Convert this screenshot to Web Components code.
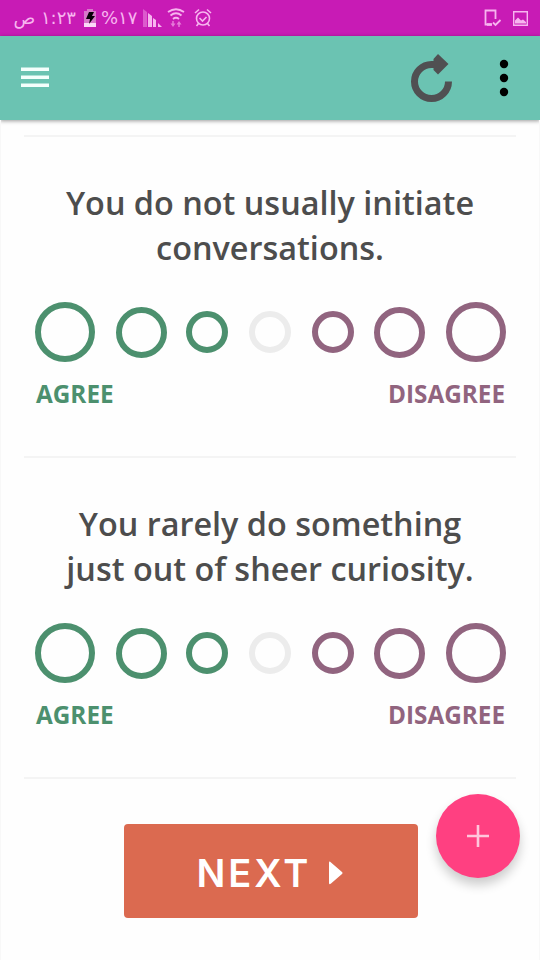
<!DOCTYPE html>
<html lang="en">
<head>
<meta charset="UTF-8">
<meta name="viewport" content="width=device-width, initial-scale=1.0">
<title>Personality Test</title>
<style>
    body {
        margin: 0;
        background: #fefefe;
        font-family: "Open Sans", "Noto Sans", sans-serif;
        color: #4d4d4d;
    }
</style>
</head>
<body>
<test-app>
    <status-bar slot="status"></status-bar>
    <app-bar slot="bar"></app-bar>
    <question-card>You do not usually initiate<br>conversations.</question-card>
    <question-card>You rarely do something<br>just out of sheer curiosity.</question-card>
    <next-button>NEXT</next-button>
    <fab-button slot="fab"></fab-button>
</test-app>

<script>
class TestApp extends HTMLElement {
    connectedCallback() {
        this.attachShadow({ mode: 'open' });
        this.shadowRoot.innerHTML = `
            <style>
                :host {
                    display: flex;
                    flex-direction: column;
                    position: relative;
                    height: 960px;
                    overflow: hidden;
                }
                main {
                    flex: 1;
                    display: flex;
                    flex-direction: column;
                    padding: 15px 23px 0;
                    border: solid #f8f8f8;
                    border-width: 0 1px;
                }
            </style>
            <slot name="status"></slot>
            <slot name="bar"></slot>
            <main><slot></slot></main>
            <slot name="fab"></slot>
        `;
    }
}

class StatusBar extends HTMLElement {
    connectedCallback() {
        this.attachShadow({ mode: 'open' });
        this.shadowRoot.innerHTML = `
            <style>
                :host {
                    display: flex;
                    justify-content: space-between;
                    box-sizing: border-box;
                    height: 36px;
                    padding: 0 12px;
                    background: #c81bb5;
                    color: #f7b5ef;
                    font: 18px/34px "DejaVu Sans", sans-serif;
                }
                .group {
                    display: flex;
                    align-items: center;
                }
                .time {
                    width: 64px;
                    white-space: nowrap;
                }
                .percent {
                    width: 34px;
                    margin-left: 5px;
                    font-size: 18px;
                    white-space: nowrap;
                }
                svg {
                    display: block;
                    fill: none;
                    stroke: currentColor;
                }
            </style>
            <div class="group">
                <span class="time" dir="rtl">١:٢٣ ص</span>
                <svg width="12" height="18" style="margin-left:8px" stroke="none">
                    <path d="M3 0h6v2h3v16H0V2h3z" fill="#d878ca" stroke="none"/>
                    <path d="M0 14h12v4H0z" fill="#fbd9f7" stroke="none"/>
                    <path d="M5 3h5L8 7h3l-6 8 1-5H2z" fill="#080008" stroke="none"/>
                </svg>
                <span class="percent">%١٧</span>
                <svg width="20" height="20" style="margin-left:8px">
                    <path d="M0 1l4 3v15H0z" fill="#dc5bcd" stroke="none"/>
                    <path d="M5 5l4 3v11H5zM10 10l3 2v7h-3zM15 15l4 4h-4z" fill="currentColor" stroke="none"/>
                </svg>
                <svg width="18" height="20" style="margin-left:4px">
                    <path d="M1 4q8-5.500 16 0M3.500 7.500q5.500-4.500 11 0M6 11q3-2.500 6 0" stroke-width="1.800"/>
                    <path d="M6 13v3M12 19v-3" stroke="#e67bd9" stroke-width="1.500"/>
                    <path d="M3.500 15.500h5L6 19zM9.500 16.500h5L12 13z" fill="#e67bd9" stroke="none"/>
                </svg>
                <svg width="18" height="20" style="margin-left:9px" stroke-width="1.600">
                    <circle cx="9" cy="10.500" r="6.500"/>
                    <path d="M1 5l4-3.500M17 5l-4-3.500M4.500 15.500L2.500 18M13.500 15.500l2 2.500M5.500 10l3 3 4-4"/>
                </svg>
            </div>
            <div class="group">
                <svg width="18" height="18" stroke-width="1.800">
                    <path d="M11.500 10V1.500H1.500v14h6"/>
                    <path d="M3 15.500h5" stroke-width="2.500"/>
                    <path d="M9 13.500l2.500 2.500 5-5"/>
                </svg>
                <svg width="15" height="15" style="margin-left:11px">
                    <path d="M.7.7h13.600v13.600H.7z" stroke-width="1.400"/>
                    <path d="M2 12.500V9.500l3-3 3 3 2-1 3 2.500v1.500z" fill="currentColor" stroke="none"/>
                </svg>
            </div>
        `;
    }
}

class AppBar extends HTMLElement {
    connectedCallback() {
        this.attachShadow({ mode: 'open' });
        this.shadowRoot.innerHTML = `
            <style>
                :host {
                    display: flex;
                    align-items: center;
                    box-sizing: border-box;
                    height: 84px;
                    padding: 0 31px 0 21px;
                    background: #6bc3b2;
                    box-shadow: 0 1px 4px rgba(0, 0, 0, 0.4);
                }
                svg {
                    display: block;
                }
                .reload {
                    margin-left: auto;
                }
                .more {
                    margin-left: 46px;
                }
            </style>
            <svg width="28" height="22" fill="#f4fffc">
                <path d="M0 .5h28v3.500H0zM0 8.500h28v3.500H0zM0 16.500h28v3.500H0z"/>
            </svg>
            <svg class="reload" width="42" height="48">
                <path d="M37.500 27.500A17 17 0 1 1 20.500 10.500H25" fill="none" stroke="#505052" stroke-width="7"/>
                <path d="M27 0L37.500 10 27 20.500 22.500 16V5z" fill="#505052"/>
            </svg>
            <svg class="more" width="10" height="38">
                <circle cx="5" cy="5" r="4.200"/>
                <circle cx="5" cy="19" r="4.200"/>
                <circle cx="5" cy="33" r="4.200"/>
            </svg>
        `;
    }
}

class QuestionCard extends HTMLElement {
    connectedCallback() {
        this.attachShadow({ mode: 'open' });
        this.shadowRoot.innerHTML = `
            <style>
                :host {
                    display: block;
                    box-sizing: border-box;
                    height: 321px;
                    padding-top: 43px;
                    border-top: 2px solid #f4f4f4;
                    text-align: center;
                }
                .question {
                    font-size: 32.4px;
                    font-weight: 600;
                    line-height: 45px;
                    white-space: nowrap;
                }
                .scale {
                    display: flex;
                    align-items: center;
                    gap: 21px;
                    margin: 32px 10px 0 11px;
                }
                .scale i {
                    box-sizing: border-box;
                    width: 42px;
                    height: 42px;
                    border: 6px solid #ececec;
                    border-radius: 50%;
                }
                .scale .md {
                    width: 51px;
                    height: 51px;
                }
                .scale .md.yes {
                    margin-right: -1.6px;
                }
                .scale .md.no {
                    margin-left: -1.4px;
                }
                .scale .lg {
                    width: 60px;
                    height: 60px;
                }
                .scale .yes {
                    border-color: #4c906e;
                }
                .scale .no {
                    border-color: #91647f;
                }
                .labels {
                    display: flex;
                    justify-content: space-between;
                    margin: 15px 11px 0 12px;
                    font-size: 24.3px;
                    font-weight: 700;
                    line-height: 34px;
                }
                .labels .yes {
                    color: #4c906e;
                }
                .labels .no {
                    color: #91647f;
                }
            </style>
            <div class="question"><slot></slot></div>
            <div class="scale">
                <i class="lg yes"></i>
                <i class="md yes"></i>
                <i class="yes"></i>
                <i></i>
                <i class="no"></i>
                <i class="md no"></i>
                <i class="lg no"></i>
            </div>
            <div class="labels">
                <span class="yes">AGREE</span>
                <span class="no">DISAGREE</span>
            </div>
        `;
    }
}

class NextButton extends HTMLElement {
    connectedCallback() {
        this.attachShadow({ mode: 'open' });
        this.shadowRoot.innerHTML = `
            <style>
                :host {
                    display: flex;
                    justify-content: center;
                    padding: 45px 0 0 1px;
                    border-top: 2px solid #f4f4f4;
                }
                button {
                    display: flex;
                    align-items: center;
                    box-sizing: border-box;
                    width: 294px;
                    height: 94px;
                    padding: 3px 0 0 73px;
                    border: 0;
                    border-radius: 4px;
                    background: #db6a50;
                    color: #fff;
                    font: 600 38px/1 Inter, sans-serif;
                    letter-spacing: 3px;
                }
                svg {
                    margin-left: 18px;
                    fill: #fff;
                }
            </style>
            <button>
                <slot></slot>
                <svg width="14" height="24"><path d="M0 2Q0-.5 2 1.500L13 11q1 1 0 2L2 22.500Q0 24 0 22z"/></svg>
            </button>
        `;
    }
}

class FabButton extends HTMLElement {
    connectedCallback() {
        this.attachShadow({ mode: 'open' });
        this.shadowRoot.innerHTML = `
            <style>
                :host {
                    position: absolute;
                    right: 20px;
                    bottom: 82px;
                    display: flex;
                    align-items: center;
                    justify-content: center;
                    width: 84px;
                    height: 84px;
                    border-radius: 50%;
                    background: #ff4081;
                    box-shadow: 0 7px 11px rgba(0, 0, 0, 0.2);
                }
            </style>
            <svg width="22" height="22" fill="none" stroke="#ffc6dc" stroke-width="2.600">
                <path d="M11 0v22M0 11h22"/>
            </svg>
        `;
    }
}

customElements.define('test-app', TestApp);
customElements.define('status-bar', StatusBar);
customElements.define('app-bar', AppBar);
customElements.define('question-card', QuestionCard);
customElements.define('next-button', NextButton);
customElements.define('fab-button', FabButton);
</script>
</body>
</html>
